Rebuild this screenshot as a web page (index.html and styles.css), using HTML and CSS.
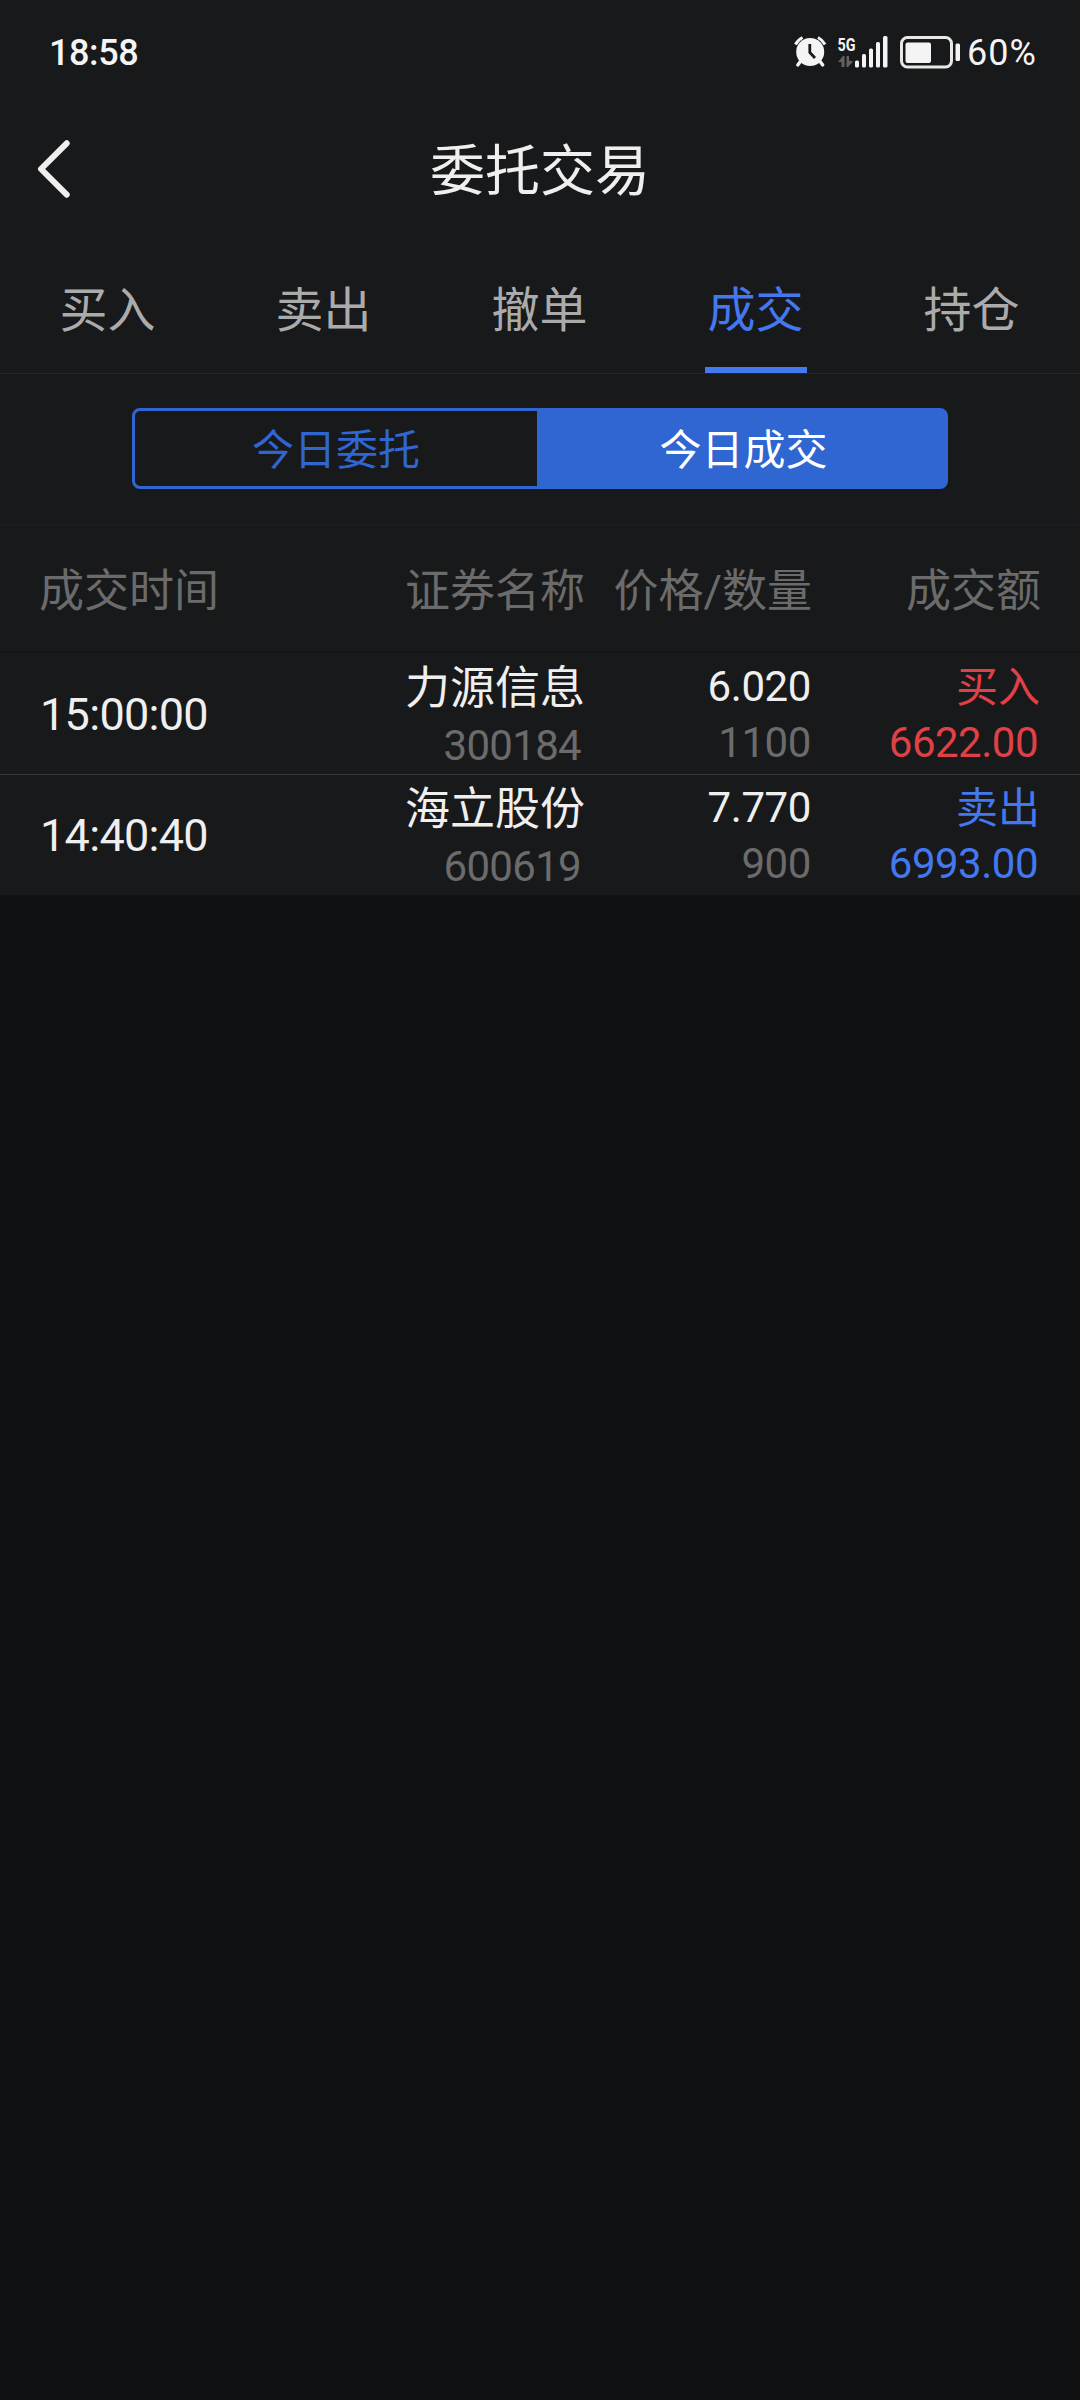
FILE: index.html
```html
<!DOCTYPE html>
<html lang="zh-CN">
<head>
<meta charset="utf-8">
<title>委托交易</title>
<link rel="stylesheet" href="styles.css">
</head>
<body>
<header class="statusbar">
  <span class="clock">18:58</span>
  <div class="indicators">
    <svg class="status-icons" width="168" height="36" viewBox="794 34 168 36">
      <g fill="#f4f4f4">
        <circle cx="810.2" cy="52" r="14"/>
        <path d="M795.500 44.500 A16 16 0 0 1 802.500 37.500" fill="none" stroke="#f4f4f4" stroke-width="3"/>
        <path d="M818 37.500 A16 16 0 0 1 825 44.500" fill="none" stroke="#f4f4f4" stroke-width="3"/>
        <path d="M800 62 L797.800 65 M820.500 62 L822.700 65" stroke="#f4f4f4" stroke-width="3.400" stroke-linecap="round"/>
      </g>
      <path d="M809.800 44 V52.500 L815 58" fill="none" stroke="#18191b" stroke-width="2.800"/>
      <text class="net" x="837.500" y="50.500" textLength="18" lengthAdjust="spacingAndGlyphs">5G</text>
      <g fill="#606164">
        <path d="M838 62 L843 56 H844.500 V67 H841.500 V62 Z"/>
        <path d="M846.500 56 H849 V60.500 L853 61.500 L848 67 H846.500 Z"/>
      </g>
      <g fill="#f4f4f4">
        <rect x="855" y="60.500" width="4" height="7" rx="1.500"/>
        <rect x="862" y="54" width="4" height="13.500" rx="1.500"/>
        <rect x="869" y="48.500" width="4" height="19" rx="1.500"/>
        <rect x="876" y="42" width="4" height="25.500" rx="1.500"/>
        <rect x="883" y="36" width="4.500" height="31.500" rx="1.500"/>
        <rect x="905.500" y="42.500" width="25.500" height="20.500" rx="2"/>
        <rect x="955.500" y="43.500" width="4.500" height="17.500" rx="1.500"/>
      </g>
      <rect x="901.500" y="37.500" width="50" height="29.500" rx="6" fill="none" stroke="#e8e8e6" stroke-width="3"/>
    </svg>
    <span class="percent">60%</span>
  </div>
</header>

<nav class="titlebar">
  <svg class="back" width="34" height="60" viewBox="0 0 34 60"><path d="M29.700 4.300 L4 30 L29.700 55.700" fill="none" stroke="#efefef" stroke-width="6" stroke-linecap="round" stroke-linejoin="round"/></svg>
  <h1 class="title">委托交易</h1>
</nav>

<div class="tabs">
  <span class="tab">买入</span>
  <span class="tab">卖出</span>
  <span class="tab">撤单</span>
  <span class="tab active">成交</span>
  <span class="tab">持仓</span>
</div>

<div class="switcher">
  <div class="segments">
    <span class="segment">今日委托</span>
    <span class="segment selected">今日成交</span>
  </div>
</div>

<main class="deals">
  <div class="row head">
    <span>成交时间</span><span>证券名称</span><span>价格/数量</span><span>成交额</span>
  </div>
  <div class="row">
    <span class="time">15:00:00</span>
    <div class="cell"><span class="name">力源信息</span><span class="code">300184</span></div>
    <div class="cell"><span class="price">6.020</span><span class="count">1100</span></div>
    <div class="cell buy"><span class="side">买入</span><span class="amount">6622.00</span></div>
  </div>
  <div class="row">
    <span class="time">14:40:40</span>
    <div class="cell"><span class="name">海立股份</span><span class="code">600619</span></div>
    <div class="cell"><span class="price">7.770</span><span class="count">900</span></div>
    <div class="cell sell"><span class="side">卖出</span><span class="amount">6993.00</span></div>
  </div>
</main>
</body>
</html>
```
FILE: styles.css
```css
* { box-sizing: border-box; }

body {
  margin: 0;
  min-height: 2400px;
  background: #101113;
  color: #efefef;
  font-family: Roboto, "Noto Sans CJK SC", sans-serif;
}

.statusbar, .titlebar, .tabs, .switcher, .deals { background: #18191b; }

.statusbar {
  display: flex;
  align-items: center;
  justify-content: space-between;
  height: 104px;
  padding: 0 42px 0 49px;
  color: #f4f4f4;
}
.clock { padding-top: 1px; font-size: 36px; font-weight: 500; line-height: 40px; letter-spacing: -0.4px; }
.indicators { display: flex; align-items: center; gap: 5px; }
.status-icons { display: block; }
.net { font: 700 19px Roboto, sans-serif; fill: #f4f4f4; }
.percent { width: 71px; padding-top: 1px; font-size: 36px; line-height: 40px; letter-spacing: 1px; }

.titlebar {
  display: grid;
  grid-template-columns: 100px 1fr 100px;
  align-items: center;
  height: 130px;
}
.back { margin-left: 37px; }
.title {
  margin: 0;
  padding-top: 4px;
  font-size: 55px;
  font-weight: 400;
  line-height: 64px;
  text-align: center;
}

.tabs {
  display: grid;
  grid-template-columns: repeat(5, 1fr);
  justify-items: center;
  height: 140px;
  border-bottom: 1px solid #27282a;
  color: #ababab;
  font-size: 48px;
}
.tab { height: 139px; padding: 0 3px 0 2px; line-height: 154px; }
.tab.active { color: #4478f0; border-bottom: 6px solid #4478f0; }

.switcher {
  display: flex;
  justify-content: center;
  height: 152px;
  padding-top: 34px;
  border-bottom: 2px solid #1a1b23;
}
.segments {
  display: grid;
  grid-template-columns: 402px 1fr;
  width: 816px;
  height: 81px;
  border: 3px solid #2f66d2;
  border-radius: 8px;
  color: #2f66d2;
  font-size: 42px;
  line-height: 71px;
  text-align: center;
}
.segment { padding-top: 4px; }
.segment.selected { padding-left: 5px; background: #2f66d2; color: #fff; }

.row {
  display: grid;
  grid-template-columns: 250px 294px 228px 228px;
  align-items: center;
  height: 121px;
  padding: 1px 40px 0;
  text-align: right;
}
.row + .row + .row { padding-top: 0; border-top: 1px solid #363739; }
.row > :first-child { text-align: left; }
.head {
  height: 127px;
  padding: 0 40px 2px;
  border-bottom: 2px solid #131416;
  color: #6b6b6b;
  font-size: 45px;
}
.time { font-size: 45px; letter-spacing: -0.7px; }
.head > :first-child { margin-left: -1px; }
.head > :nth-child(2), .head > :last-child, .name { margin-right: -1px; }
.cell { display: flex; flex-direction: column; padding-top: 1px; line-height: 56px; font-size: 42px; }
.name { position: relative; top: 2px; font-size: 45px; }
.side { position: relative; top: 1px; }
.code, .count { color: #6b6b6b; }
.code { padding: 3px 3px 0 0; margin-bottom: -3px; letter-spacing: -0.7px; }
.price, .count { padding-right: 1px; letter-spacing: -0.4px; }
.amount { padding-right: 2px; letter-spacing: -0.5px; }
.buy { color: #e04046; }
.sell { color: #4478f0; }
```
